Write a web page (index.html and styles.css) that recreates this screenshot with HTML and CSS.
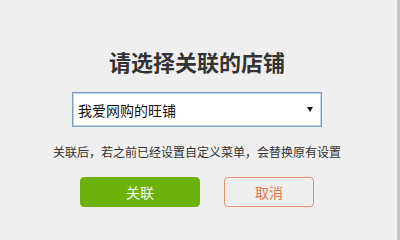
FILE: index.html
```html
<!DOCTYPE html>
<html lang="zh-CN">
<head>
<meta charset="utf-8">
<link rel="stylesheet" href="styles.css">
</head>
<body>
<div class="page">
  <h1 class="title">请选择关联的店铺</h1>
  <div class="select">
    <span class="select-text">我爱网购的旺铺</span>
    <svg class="arrow" width="6" height="5" viewBox="0 0 6 5"><polygon points="0,0 6,0 3,5" fill="#111"/></svg>
  </div>
  <p class="note">关联后，若之前已经设置自定义菜单，会替换原有设置</p>
  <div class="actions">
    <button class="btn btn-primary">关联</button>
    <button class="btn btn-cancel">取消</button>
  </div>
</div>
<div class="edge"></div>
</body>
</html>
```
FILE: styles.css
```css
html, body {
  margin: 0;
  padding: 0;
  width: 400px;
  height: 240px;
  overflow: hidden;
  background: #efefef;
  font-family: "Noto Sans CJK SC", "Noto Sans", sans-serif;
  color: #333;
}
.page {
  width: 394px;
  padding-top: 46px;
  display: flex;
  flex-direction: column;
  align-items: center;
}
.title {
  margin: 0;
  font-size: 22px;
  line-height: 30px;
  font-weight: bold;
  color: #333;
}
.select {
  margin-top: 16px;
  width: 250px;
  height: 35px;
  box-sizing: border-box;
  border: 1px solid #7f9cc4;
  box-shadow: inset 0 0 0 1px #c3d1e6;
  background: #fff;
  display: flex;
  align-items: center;
  justify-content: space-between;
  padding: 0 8px 0 5px;
}
.select-text {
  font-size: 14px;
  color: #111;
  line-height: 20px;
}
.arrow {
  display: block;
}
.note {
  margin: 15px 0 0;
  font-size: 12px;
  line-height: 20px;
  color: #333;
}
.actions {
  margin-top: 15px;
  display: flex;
  gap: 24px;
}
.btn {
  height: 30px;
  box-sizing: border-box;
  border-radius: 4px;
  font-family: inherit;
  font-size: 14px;
  padding: 0;
  cursor: pointer;
}
.btn-primary {
  width: 120px;
  background: #6bb20b;
  border: 1px solid #6bb20b;
  color: #f4f8ee;
}
.btn-cancel {
  width: 90px;
  background: transparent;
  border: 1px solid #e3906a;
  color: #e0764c;
}
.edge {
  position: absolute;
  top: 0;
  right: 0;
  width: 3px;
  height: 240px;
  background: #c4c4c4;
}
```
